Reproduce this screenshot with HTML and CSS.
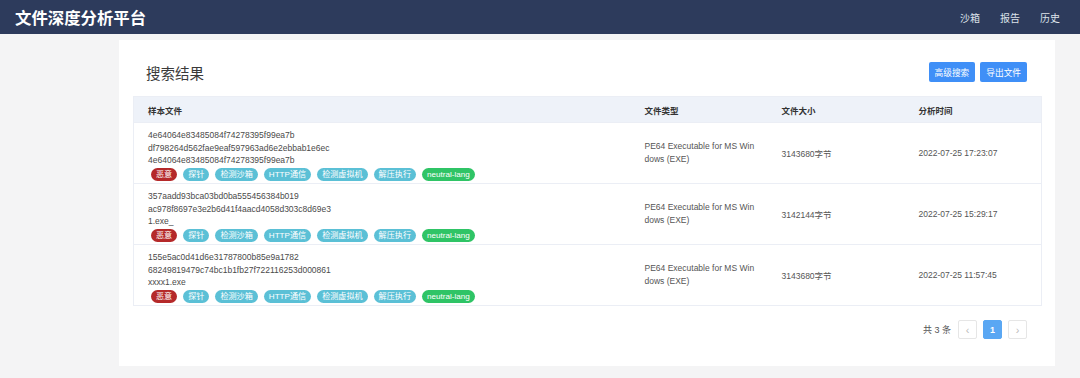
FILE: index.html
```html
<!DOCTYPE html>
<html lang="zh">
<head>
<meta charset="utf-8">
<title>文件深度分析平台</title>
<link rel="stylesheet" href="styles.css">
</head>
<body>
<header class="topbar">
  <div class="brand">文件深度分析平台</div>
  <nav class="nav">
    <a class="nav-item">沙箱</a>
    <a class="nav-item">报告</a>
    <a class="nav-item">历史</a>
  </nav>
</header>
<main class="card">
  <div class="toolbar">
    <h2 class="title">搜索结果</h2>
    <div class="actions">
      <button class="btn">高级搜索</button>
      <button class="btn">导出文件</button>
    </div>
  </div>
  <table class="grid">
    <thead>
      <tr>
        <th class="c-file">样本文件</th>
        <th class="c-type">文件类型</th>
        <th class="c-size">文件大小</th>
        <th class="c-time">分析时间</th>
      </tr>
    </thead>
    <tbody>
      <tr>
        <td class="c-file">
          <div class="line">4e64064e83485084f74278395f99ea7b</div>
          <div class="line">df798264d562fae9eaf597963ad6e2ebbab1e6ec</div>
          <div class="line">4e64064e83485084f74278395f99ea7b</div>
          <div class="tags">
            <span class="tag red">恶意</span><span class="tag cyan">探针</span><span class="tag cyan">检测沙箱</span><span class="tag cyan">HTTP通信</span><span class="tag cyan">检测虚拟机</span><span class="tag cyan">解压执行</span><span class="tag green">neutral-lang</span>
          </div>
        </td>
        <td class="c-type"><div class="wrap">PE64 Executable for MS Windows (EXE)</div></td>
        <td class="c-size">3143680字节</td>
        <td class="c-time">2022-07-25 17:23:07</td>
      </tr>
      <tr>
        <td class="c-file">
          <div class="line">357aadd93bca03bd0ba555456384b019</div>
          <div class="line">ac978f8697e3e2b6d41f4aacd4058d303c8d69e3</div>
          <div class="line">1.exe_</div>
          <div class="tags">
            <span class="tag red">恶意</span><span class="tag cyan">探针</span><span class="tag cyan">检测沙箱</span><span class="tag cyan">HTTP通信</span><span class="tag cyan">检测虚拟机</span><span class="tag cyan">解压执行</span><span class="tag green">neutral-lang</span>
          </div>
        </td>
        <td class="c-type"><div class="wrap">PE64 Executable for MS Windows (EXE)</div></td>
        <td class="c-size">3142144字节</td>
        <td class="c-time">2022-07-25 15:29:17</td>
      </tr>
      <tr>
        <td class="c-file">
          <div class="line">155e5ac0d41d6e31787800b85e9a1782</div>
          <div class="line">68249819479c74bc1b1fb27f722116253d000861</div>
          <div class="line">xxxx1.exe</div>
          <div class="tags">
            <span class="tag red">恶意</span><span class="tag cyan">探针</span><span class="tag cyan">检测沙箱</span><span class="tag cyan">HTTP通信</span><span class="tag cyan">检测虚拟机</span><span class="tag cyan">解压执行</span><span class="tag green">neutral-lang</span>
          </div>
        </td>
        <td class="c-type"><div class="wrap">PE64 Executable for MS Windows (EXE)</div></td>
        <td class="c-size">3143680字节</td>
        <td class="c-time">2022-07-25 11:57:45</td>
      </tr>
    </tbody>
  </table>
  <div class="pager">
    <span class="total">共 3 条</span>
    <span class="pg disabled">&#8249;</span>
    <span class="pg active">1</span>
    <span class="pg disabled">&#8250;</span>
  </div>
</main>
</body>
</html>
```
FILE: styles.css
```css
* { box-sizing: border-box; }
html, body { margin: 0; padding: 0; }
body {
  background: #f4f4f5;
  font-family: "Liberation Sans", "Noto Sans CJK SC", sans-serif;
  color: #555;
  height: 378px;
  overflow: hidden;
}
.topbar {
  height: 34px;
  background: #2d3b5c;
  display: flex;
  align-items: center;
  justify-content: space-between;
  padding: 0 20px 0 15px;
}
.brand {
  color: #fff;
  font-size: 16.4px;
  font-weight: bold;
}
.nav { display: flex; gap: 20px; }
.nav-item {
  color: #dde2ea;
  font-size: 10px;
}
.card {
  margin: 6px 0 0 119px;
  width: 936px;
  background: #fff;
  padding: 0 14px 27px 14px;
}
.toolbar {
  display: flex;
  align-items: center;
  justify-content: space-between;
  padding: 22px 14px 0 13px;
  height: 42px;
  margin-bottom: 14px;
}
.title {
  margin: 0;
  font-size: 14.5px;
  font-weight: normal;
  color: #3a3a3a;
}
.actions { display: flex; gap: 5px; }
.btn {
  border: 0;
  height: 20px;
  padding: 0 6px;
  background: #3f8ff7;
  color: #fff;
  font-family: inherit;
  font-size: 8.7px;
  border-radius: 2px;
}
.grid {
  width: 908px;
  border-collapse: collapse;
  table-layout: fixed;
  border: 1px solid #ebeef5;
}
.grid th {
  height: 26px;
  background: #eef2f9;
  text-align: left;
  font-size: 8.5px;
  font-weight: bold;
  color: #333;
  padding: 0 14px;
}
.c-file { width: 497px; }
.c-type, .c-size, .c-time { width: 137px; }
.grid td {
  height: 61px;
  border-top: 1px solid #ebeef5;
  font-size: 8.5px;
  color: #555;
  padding: 0 14px;
  vertical-align: middle;
}
.grid td.c-file { padding: 6px 14px 2px 14px; }
.line { line-height: 12.5px; color: #4a4a4a; }
.wrap {
  width: 111px;
  word-break: break-all;
  line-height: 13px;
}
.tags { display: flex; gap: 6px; margin-top: 1px; padding-left: 3px; }
.tag {
  display: inline-block;
  height: 13px;
  line-height: 13px;
  padding: 0 5px;
  border-radius: 7px;
  color: #fff;
  font-size: 8.1px;
}
.tag.red { background: #b5292a; }
.tag.cyan { background: #5bc0d6; }
.tag.green { background: #2fc466; }
.pager {
  display: flex;
  justify-content: flex-end;
  align-items: center;
  gap: 6px;
  margin-top: 14px;
  padding-right: 14px;
}
.total { font-size: 9px; color: #555; margin-right: 1px; }
.pg {
  width: 19px;
  height: 19px;
  display: flex;
  align-items: center;
  justify-content: center;
  font-size: 11px;
  border: 1px solid #e6e6e6;
  border-radius: 2px;
  color: #bbb;
  background: #fff;
}
.pg.active {
  background: #5aa7f3;
  border-color: #5aa7f3;
  color: #fff;
  font-size: 9px;
  font-weight: bold;
}
```
